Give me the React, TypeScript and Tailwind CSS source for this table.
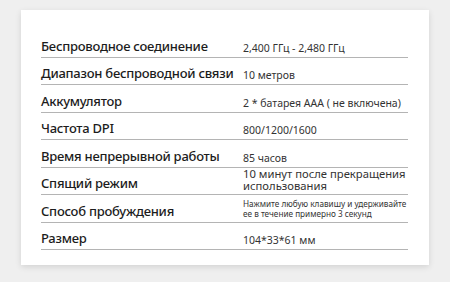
import React from 'react';

type Row = {
  label: string;
  lines: string[];
  size?: 'md' | 'lg' | 'sm';
};

const rows: Row[] = [
  { label: 'Беспроводное соединение', lines: ['2,400 ГГц - 2,480 ГГц'] },
  { label: 'Диапазон беспроводной связи', lines: ['10 метров'] },
  { label: 'Аккумулятор', lines: ['2 * батарея ААА ( не включена)'] },
  { label: 'Частота DPI', lines: ['800/1200/1600'] },
  { label: 'Время непрерывной работы', lines: ['85 часов'] },
  {
    label: 'Спящий режим',
    size: 'lg',
    lines: ['10 минут после прекращения', 'использования'],
  },
  {
    label: 'Способ пробуждения',
    size: 'sm',
    lines: ['Нажмите любую клавишу и удерживайте', 'ее в течение примерно 3 секунд'],
  },
  { label: 'Размер', lines: ['104*33*61 мм'] },
];

const valueClass = {
  md: 'text-[10.5px] leading-[12px] pb-[1px]',
  lg: 'text-[11.25px] leading-[12px]',
  sm: 'text-[8.2px] leading-[10px] pb-[1px]',
};

export default function App() {
  return (
    <div className="w-[450px] h-[282px] bg-[#efefef] pt-[10px] pl-[21px] font-['Noto_Sans',sans-serif]">
      <div className="w-[408px] h-[255px] bg-white shadow-[0_2px_6px_rgba(0,0,0,0.12)] pt-[20px] pl-[20px]">
        <div className="w-[367px] flex flex-col">
          {rows.map((r) => (
            <div
              key={r.label}
              className="h-[27.5px] flex items-end border-b border-[#b4b4b4] pb-[2px]"
            >
              <div className="w-[202px] shrink-0 text-[13px] leading-[17px] tracking-[-0.25px] font-medium text-[#1c1c1c] whitespace-nowrap">
                {r.label}
              </div>
              <div className={`${valueClass[r.size ?? 'md']} flex flex-col text-[#333] whitespace-nowrap`}>
                {r.lines.map((l) => (
                  <div key={l}>{l}</div>
                ))}
              </div>
            </div>
          ))}
        </div>
      </div>
    </div>
  );
}
